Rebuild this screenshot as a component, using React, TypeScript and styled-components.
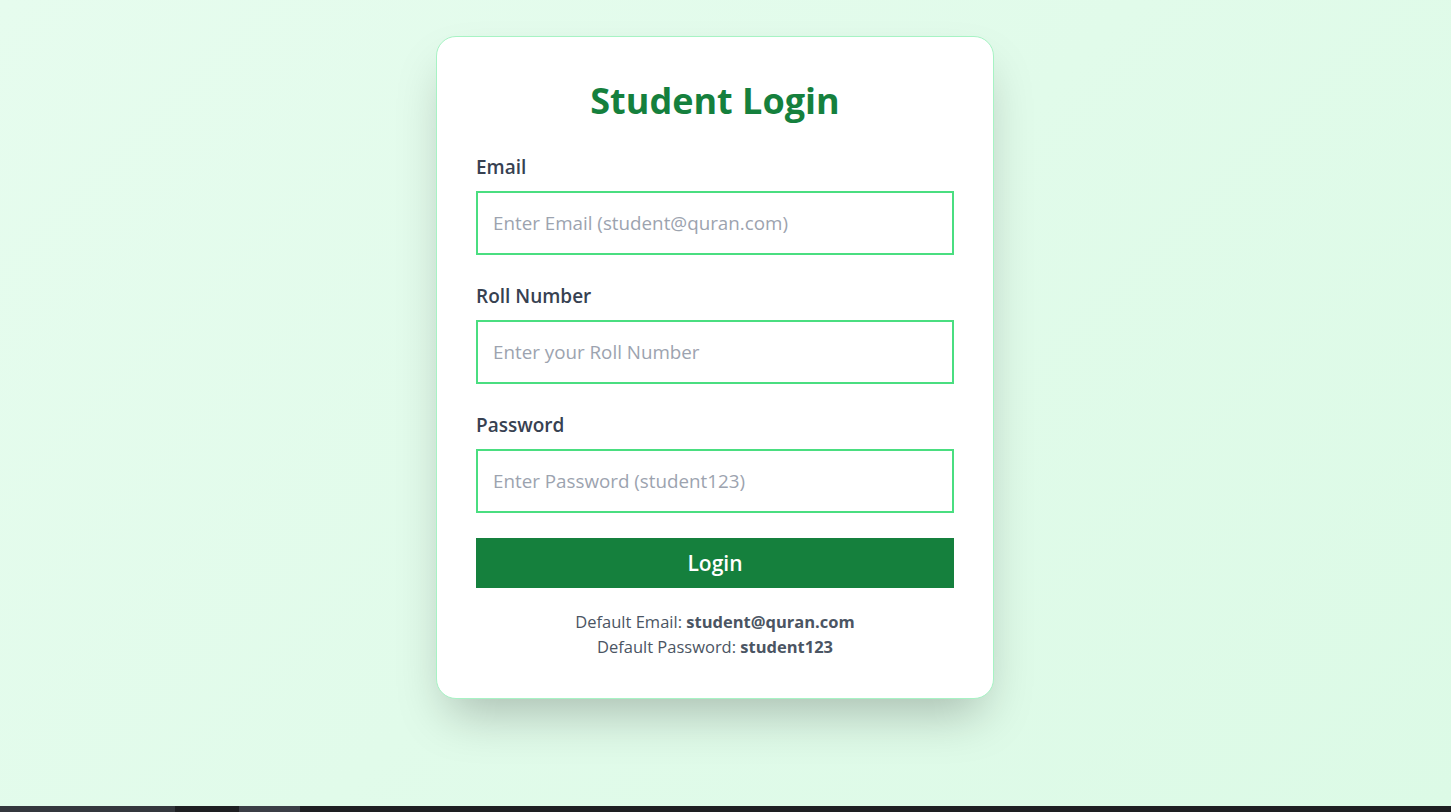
import React from 'react'
import styled, { createGlobalStyle } from 'styled-components'

const GlobalStyle = createGlobalStyle`
  html, body {
    margin: 0;
    padding: 0;
    height: 100%;
  }
  body {
    font-family: "Segoe UI", "Open Sans", sans-serif;
  }
  #root {
    height: 100%;
  }
`

const Page = styled.div`
  height: 812px;
  display: flex;
  flex-direction: column;
  background: linear-gradient(135deg, #e6fcee 0%, #dcfae6 100%);
  overflow: hidden;
`

const Main = styled.main`
  flex: 1;
  display: flex;
  justify-content: center;
  align-items: flex-start;
  padding: 36px 21px 0 0;
`

const Card = styled.div`
  width: 558px;
  box-sizing: border-box;
  background: #ffffff;
  border: 1px solid #a7f3c4;
  border-radius: 20px;
  padding: 39px 39px 39px;
  box-shadow: 0 25px 50px -12px rgba(0, 0, 0, 0.25);
`

const Title = styled.h1`
  margin: 5px 0 32px;
  text-align: center;
  color: #15803d;
  font-size: 36px;
  line-height: 40px;
  font-weight: 700;
`

const Field = styled.div`
  margin-bottom: 27px;
`

const Label = styled.label`
  display: block;
  color: #374151;
  font-size: 19px;
  line-height: 28px;
  font-weight: 600;
  margin-bottom: 10px;
`

const Input = styled.input`
  display: block;
  width: 100%;
  height: 64px;
  box-sizing: border-box;
  border: 2px solid #4ade80;
  border-radius: 0;
  padding: 0 15px;
  font-family: inherit;
  font-size: 18.8px;
  color: #111827;
  background: #fff;
  outline: none;

  &::placeholder {
    color: #9ca3af;
  }
`

const Button = styled.button`
  display: block;
  width: 100%;
  height: 50px;
  margin-top: -2px;
  border: none;
  background: #15803d;
  color: #ffffff;
  font-family: inherit;
  font-size: 21px;
  font-weight: 600;
  cursor: pointer;
`

const Hint = styled.div`
  margin-top: 21px;
  text-align: center;
  color: #4b5563;
  font-size: 16.5px;
  line-height: 25px;

  strong {
    font-weight: 700;
  }
`

const Taskbar = styled.div`
  height: 6px;
  background: #1e1f22;
  display: flex;
`

const TaskSegment = styled.div<{ $w: number; $bg: string; $gap?: number }>`
  width: ${(p) => p.$w}px;
  margin-left: ${(p) => p.$gap ?? 0}px;
  background: ${(p) => p.$bg};
`

const App = () => {
  return (
    <Page>
      <GlobalStyle />
      <Main>
        <Card>
          <Title>Student Login</Title>
          <Field>
            <Label>Email</Label>
            <Input type="email" placeholder="Enter Email (student@quran.com)" />
          </Field>
          <Field>
            <Label>Roll Number</Label>
            <Input type="text" placeholder="Enter your Roll Number" />
          </Field>
          <Field>
            <Label>Password</Label>
            <Input type="password" placeholder="Enter Password (student123)" />
          </Field>
          <Button>Login</Button>
          <Hint>
            <div>
              Default Email: <strong>student@quran.com</strong>
            </div>
            <div>
              Default Password: <strong>student123</strong>
            </div>
          </Hint>
        </Card>
      </Main>
      <Taskbar>
        <TaskSegment $w={175} $bg="#34373d" />
        <TaskSegment $w={61} $bg="#3b3e46" $gap={64} />
      </Taskbar>
    </Page>
  )
}

export default App
